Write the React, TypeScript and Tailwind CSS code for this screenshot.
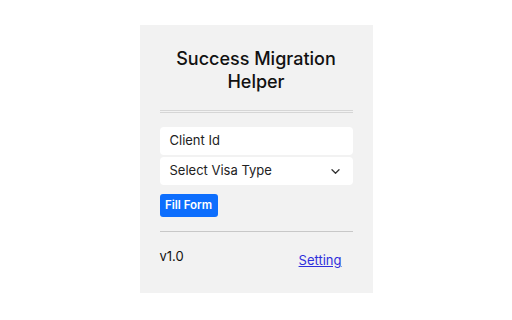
import React from 'react';

export default function App() {
  return (
    <div className="w-[512px] h-[320px] bg-white flex justify-center pt-[25px]" style={{ fontFamily: 'Inter, "Liberation Sans", sans-serif' }}>
      <div className="w-[233px] h-[268px] bg-[#f2f2f2] px-5 pt-[22px] flex flex-col">
        {/* Title */}
        <h1 className="text-center text-[18px] leading-[23px] font-medium text-[#111]">
          Success Migration Helper
        </h1>

        <div className="mt-[17px] h-[3px] border-y border-[#d6d6d6]" />

        {/* Form */}
        <div className="mt-[14px] flex flex-col gap-[2px]">
          <div className="h-[28px] bg-white rounded-[4px] px-[10px] flex items-center text-[13px] text-[#222]">
            Client Id
          </div>
          <div className="h-[28px] bg-white rounded-[4px] pl-[10px] pr-[13px] flex items-center justify-between text-[13px] text-[#222]">
            <span>Select Visa Type</span>
            <svg width="9" height="5" viewBox="0 0 9 5" fill="none">
              <path d="M1 0.8l3.5 3.4 3.5-3.4" stroke="#333" strokeWidth="1.3" strokeLinecap="round" strokeLinejoin="round" />
            </svg>
          </div>
        </div>

        <div className="mt-[9px] flex">
          <button className="h-[23px] w-[58px] bg-[#0d6efd] rounded-[3px] text-white text-[11.5px] font-semibold leading-none">
            Fill Form
          </button>
        </div>

        <div className="mt-[14px] border-t border-[#c8c8c8]" />

        {/* Footer */}
        <div className="mt-[16px] flex justify-between text-[13px] leading-[16px]">
          <span className="text-[#111]">v1.0</span>
          <a href="#" className="mt-[4px] mr-[11px] text-[#2f2fdc] underline">
            Setting
          </a>
        </div>
      </div>
    </div>
  );
}
